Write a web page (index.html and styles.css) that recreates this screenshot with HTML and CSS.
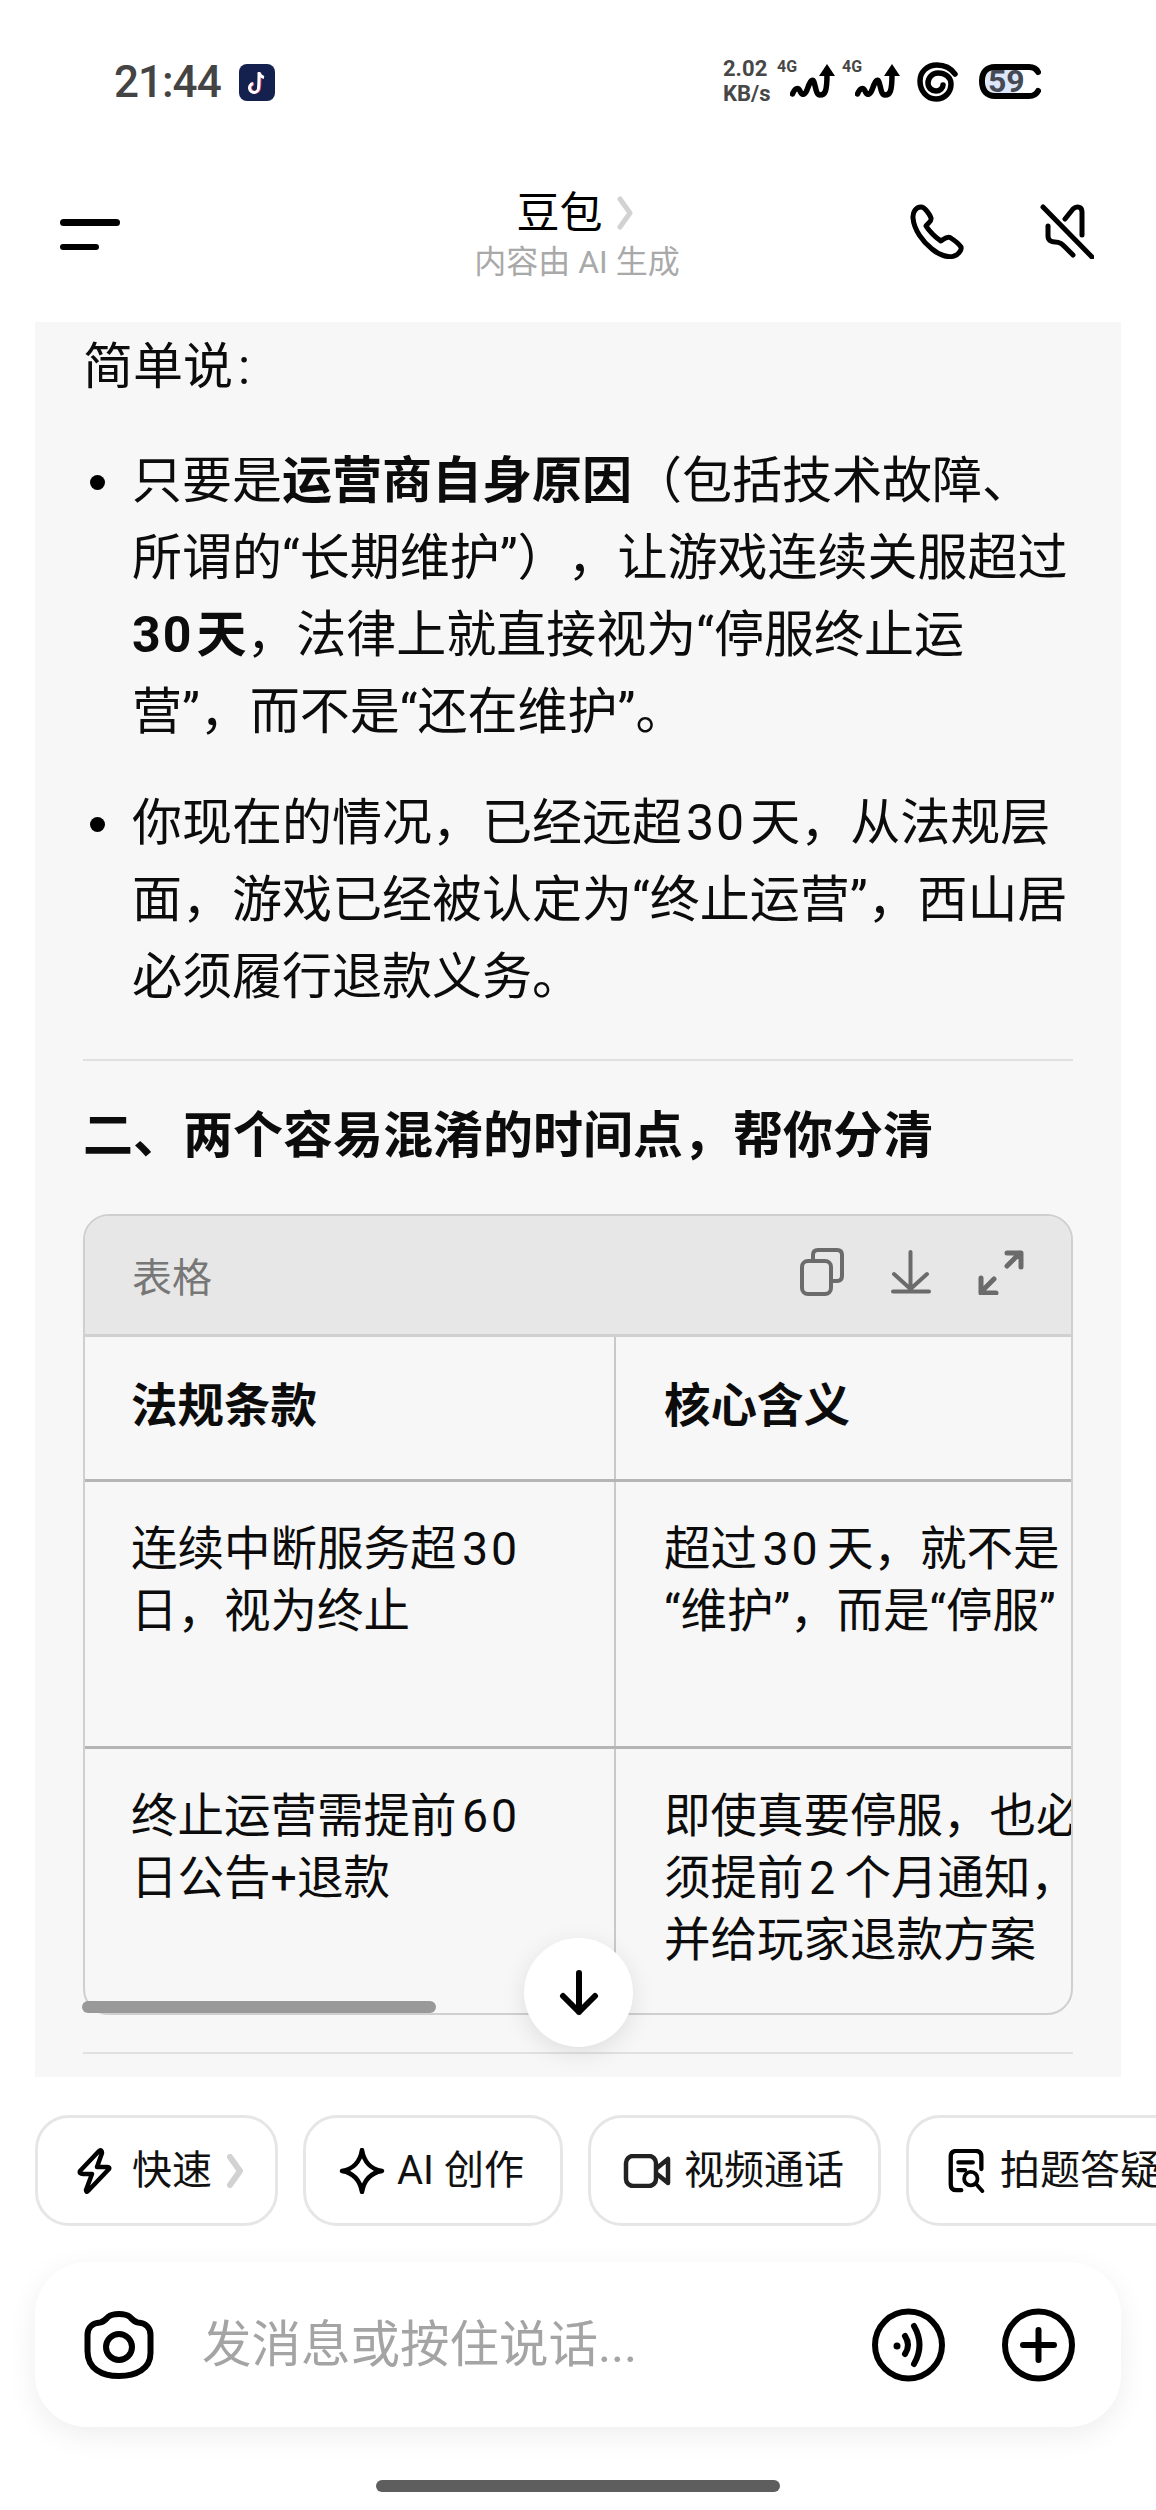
FILE: index.html
```html
<!DOCTYPE html>
<html lang="zh-CN">
<head>
<meta charset="utf-8">
<title>豆包</title>
<link rel="stylesheet" href="styles.css">
</head>
<body>
<div class="screen">
  <div class="status">
    <div class="status-left">
      <span class="time">21:44</span>
      <svg class="tt" width="36" height="37" viewBox="0 0 36 37"><rect width="36" height="37" rx="8" fill="#14204d"/><path d="M21 9C21 14 21 20 20.500 24A4.500 4.500 0 1 1 15 19.500" fill="none" stroke="#f0475e" stroke-width="3"/><path d="M20 8C20 10 22 13 25 13.500M20 9C20 14 20 20 19.500 24A4.500 4.500 0 1 1 14 19.500" fill="none" stroke="#fff" stroke-width="3"/></svg>
    </div>
    <div class="status-right">
      <div class="speed"><span>2.02</span><span>KB/s</span></div>
      <div class="net">
        <span class="g">4G</span>
        <svg class="sig" width="45" height="34" viewBox="0 0 45 34"><path d="M2.500 30C5 24 8 23 10 27C12 32 15 31 17 26C19 20 22 13 24 18C26 24 26 31 30 31C35 31 37 28 37 10" fill="none" stroke="#000" stroke-width="5.500" stroke-linecap="round"/><path d="M29 12L37 0L45 12Z" fill="#000"/></svg>
      </div>
      <div class="net">
        <span class="g">4G</span>
        <svg class="sig" width="45" height="34" viewBox="0 0 45 34"><path d="M2.500 30C5 24 8 23 10 27C12 32 15 31 17 26C19 20 22 13 24 18C26 24 26 31 30 31C35 31 37 28 37 10" fill="none" stroke="#000" stroke-width="5.500" stroke-linecap="round"/><path d="M29 12L37 0L45 12Z" fill="#000"/></svg>
      </div>
      <svg class="spiral" width="41" height="40" viewBox="0 0 41 40"><path d="M38 12C33 5 26 3 20 3C10 3 3 10 3 19C3 29 10 37 19 37C28 37 34 30 34 22C34 15 28 11 21 11C15 11 11 16 11 21C11 26 15 29 19 29C23 29 26 26 26 23" fill="none" stroke="#000" stroke-width="5.500" stroke-linecap="round"/></svg>
      <div class="battery">
        <svg width="62" height="37" viewBox="0 0 62 37"><rect x="7" y="7" width="33" height="23" rx="6" fill="#dde7fb"/><path d="M59 9C57 5 54 4 50 4L16 4C8 4 3 9 3 18C3 28 8 33 16 33L50 33C54 33 57 32 59 28" fill="none" stroke="#000" stroke-width="6" stroke-linecap="round"/></svg>
        <span class="batt-num">59</span>
      </div>
    </div>
  </div>

  <div class="topbar">
    <div class="menu"><i class="menu-a"></i><i class="menu-b"></i></div>
    <div class="title-wrap">
      <div class="title"><span>豆包</span><svg width="17" height="34" viewBox="0 0 17 34"><path d="M3 3L13 17L3 31" fill="none" stroke="#d2d2d2" stroke-width="5" stroke-linecap="round" stroke-linejoin="round"/></svg></div>
      <div class="sub">内容由 AI 生成</div>
    </div>
    <div class="top-actions">
      <svg width="54" height="55" viewBox="0 0 54 55"><path d="M11 3C6 3 2.500 8 3 14C4 26 13 38 22 45C29 51 38 54 44 52C48 51 52 46 51 43C49 40 44 36 40 33.500C37 32 34 35 31 37C26 34 19 27 16 22C18 19 22 17 21 14C20 11 15 3 11 3Z" fill="none" stroke="#000" stroke-width="5" stroke-linejoin="round"/></svg>
      <svg width="54" height="55" viewBox="0 0 54 55"><path d="M3 3L52 53M25 15L33 5C36 2 42 2 42 8L42 31M8 22L8 32C8 36 11 38 15 38C20 38 22 40 25 43L33 51" fill="none" stroke="#000" stroke-width="5" stroke-linecap="round" stroke-linejoin="round"/></svg>
    </div>
  </div>

  <main class="panel">
    <p class="para">简单说<span class="colon">:</span></p>
    <ul class="bullets">
      <li><div>只要是<b>运营商自身原因</b>（包括技术故障、<br>所谓的“长期维护”），让游戏连续关服超过<br><b><span class="num-lead">30</span>天</b>，法律上就直接视为“停服终止运<br>营”，而不是“还在维护”。</div></li>
      <li><div>你现在的情况，已经远超<span class="num">30</span>天，从法规层<br>面，游戏已经被认定为“终止运营”，西山居<br>必须履行退款义务。</div></li>
    </ul>
    <hr class="rule">
    <h2 class="heading">二、两个容易混淆的时间点，帮你分清</h2>
    <div class="card-wrap">
      <section class="card">
        <div class="toolbar">
          <span class="tool-label">表格</span>
          <div class="tools">
            <svg width="44" height="48" viewBox="0 0 44 48"><rect x="2" y="13" width="29" height="33" rx="6" fill="none" stroke="#6b6b6b" stroke-width="4"/><path d="M13 12V7Q13 2 18 2H37Q42 2 42 7V28Q42 33 37 33H32" fill="none" stroke="#6b6b6b" stroke-width="4"/></svg>
            <svg width="40" height="44" viewBox="0 0 40 44"><path d="M19.500 2V39M3 24L19.500 39L36 24M2 41.500H38" fill="none" stroke="#6b6b6b" stroke-width="4" stroke-linecap="round" stroke-linejoin="round"/></svg>
            <svg width="46" height="46" viewBox="0 0 46 46"><path d="M29 4H43V18M42 4L29 17M3 29V44H18M3 43L16 30" fill="none" stroke="#6b6b6b" stroke-width="5" stroke-linecap="round" stroke-linejoin="round"/></svg>
          </div>
        </div>
        <table class="tbl">
          <colgroup><col class="c1"><col class="c2"></colgroup>
          <tr class="r-head"><th>法规条款</th><th>核心含义</th></tr>
          <tr class="r-one"><td>连续中断服务超<span class="num">30</span><br>日，视为终止</td><td>超过<span class="num">30</span>天，就不是<br>“维护”，而是“停服”</td></tr>
          <tr class="r-two"><td>终止运营需提前<span class="num">60</span><br>日公告+退款</td><td>即使真要停服，也必<br>须提前<span class="num">2</span>个月通知，<br>并给玩家退款方案</td></tr>
        </table>
      </section>
      <div class="thumb"></div>
    </div>
    <hr class="rule rule-b">
    <button class="down"><svg width="40" height="46" viewBox="0 0 40 46"><path d="M20 3V42M4 26L20 42L36 26" fill="none" stroke="#000" stroke-width="6" stroke-linecap="round" stroke-linejoin="round"/></svg></button>
  </main>

  <div class="chips">
    <div class="chip chip-a"><svg width="36" height="46" viewBox="0 0 34 46"><path d="M22 3L3 23Q2 26 6 26L15 26L9 42Q9 45 11 43L32 21Q33 19 30 19L20 19L25 5Q25 1 22 3Z" fill="none" stroke="#000" stroke-width="4.500" stroke-linejoin="round"/></svg><span>快速</span><svg class="chev" width="16" height="34" viewBox="0 0 16 34"><path d="M3 3L13 17L3 31" fill="none" stroke="#d2d2d2" stroke-width="6" stroke-linecap="round" stroke-linejoin="round"/></svg></div>
    <div class="chip chip-b"><svg width="46" height="46" viewBox="0 0 44 46"><path d="M22 2C24 14 30 21 42 23C30 25 24 32 22 44C20 32 14 25 2 23C14 21 20 14 22 2Z" fill="none" stroke="#000" stroke-width="4.500" stroke-linejoin="round"/></svg><span>AI 创作</span></div>
    <div class="chip chip-c"><svg width="48" height="34" viewBox="0 0 46 34"><rect x="2" y="2" width="30" height="30" rx="7" fill="none" stroke="#222" stroke-width="4.500"/><path d="M33 14L44 5V29L33 20" fill="none" stroke="#222" stroke-width="4.500" stroke-linejoin="round"/></svg><span>视频通话</span></div>
    <div class="chip chip-d"><svg width="38" height="44" viewBox="0 0 38 46"><path d="M13 43H8Q2 43 2 37V8Q2 2 8 2H28Q34 2 34 8V21M10 14H25M10 22H17" fill="none" stroke="#000" stroke-width="4.500" stroke-linecap="round"/><circle cx="23" cy="31" r="7" fill="none" stroke="#000" stroke-width="4"/><path d="M28 36L35 44" fill="none" stroke="#000" stroke-width="4" stroke-linecap="round"/></svg><span>拍题答疑</span></div>
  </div>

  <div class="composer">
    <svg width="70" height="68" viewBox="0 0 70 68"><path d="M3.500 40V24C3.500 16 9 12 16 11.500C20 11 22 8 24 6C27 3.500 31 3 35 3C39 3 43 3.500 46 6C48 8 50 11 54 11.500C61 12 66.500 16 66.500 24V42C66.500 58 52 65 35 65C18 65 3.500 58 3.500 40Z" fill="none" stroke="#000" stroke-width="6" stroke-linejoin="round"/><circle cx="35" cy="36" r="13" fill="none" stroke="#000" stroke-width="6"/></svg>
    <span class="placeholder">发消息或按住说话...</span>
    <div class="comp-actions">
      <svg width="73" height="74" viewBox="0 0 73 74"><circle cx="36.500" cy="37" r="33.500" fill="none" stroke="#000" stroke-width="6"/><circle cx="25" cy="38" r="3.500" fill="#000"/><path d="M33 28Q39 37 33 46M42 18Q53 37 42 56" fill="none" stroke="#000" stroke-width="6" stroke-linecap="round"/></svg>
      <svg width="73" height="74" viewBox="0 0 73 74"><circle cx="36.500" cy="37" r="33.500" fill="none" stroke="#000" stroke-width="6"/><path d="M21 37H52M36.500 22V52" fill="none" stroke="#000" stroke-width="6" stroke-linecap="round"/></svg>
    </div>
  </div>

  <div class="home"></div>
</div>
</body>
</html>
```
FILE: styles.css
```css
* { box-sizing: border-box; }
html, body { margin: 0; padding: 0; background: #fff; }
body { font-family: Roboto, "Noto Sans CJK SC", sans-serif; color: #0c0c0c; text-spacing-trim: space-all; }
.screen { width: 1156px; height: 2510px; overflow: hidden; display: flex; flex-direction: column; }

.status { height: 160px; padding: 59px 115px 0 114px; display: flex; justify-content: space-between; align-items: flex-start; flex: none; }
.status-left { display: flex; align-items: center; gap: 18px; height: 46px; }
.time { font-size: 44px; font-weight: 500; color: #444; line-height: 46px; letter-spacing: -1px; }
.status-right { display: flex; align-items: flex-start; height: 46px; }
.speed { display: flex; flex-direction: column; width: 54px; font-size: 22px; font-weight: 700; line-height: 25px; color: #474747; margin-top: -3px; white-space: nowrap; }
.net { display: flex; align-items: flex-start; width: 65px; }
.g { font-size: 16px; font-weight: 700; color: #474747; line-height: 14px; margin-top: 1px; }
.sig { margin-left: -7px; margin-top: 5px; }
.spiral { margin: 3px 21px 0 10px; flex: none; }
.battery { position: relative; width: 62px; height: 37px; margin-top: 4px; flex: none; }
.battery svg { display: block; }
.batt-num { position: absolute; left: 9px; top: 0; font-size: 32px; font-weight: 700; line-height: 37px; color: #454a55; }

.topbar { height: 162px; flex: none; display: grid; grid-template-columns: 1fr auto 1fr; padding: 0 62px 0 60px; }
.menu { display: flex; flex-direction: column; gap: 18px; padding-top: 59px; }
.menu i { display: block; height: 6.500px; border-radius: 4px; background: #000; }
.menu-a { width: 60px; }
.menu-b { width: 39px; }
.title-wrap { display: flex; flex-direction: column; align-items: center; padding-top: 25px; }
.title { display: flex; align-items: center; gap: 14px; font-size: 43px; line-height: 56px; height: 56px; margin-right: 4px; color: #000; }
.sub { font-size: 32px; line-height: 44px; margin-top: -1px; color: #a9a9a9; }
.top-actions { display: flex; justify-content: flex-end; gap: 76px; padding-top: 44px; }

.panel { position: relative; height: 1755px; flex: none; margin: 0 35px; padding: 7px 48px 0; background: #f7f7f7; overflow: hidden; }
.para { margin: 0 0 37px; font-size: 50px; line-height: 77px; }
.colon { margin-left: 5px; }
.bullets { margin: 0; padding: 0; list-style: none; font-size: 50px; line-height: 77px; white-space: nowrap; }
.bullets li { display: flex; margin-bottom: 34px; }
.bullets li::before { content: ""; flex: none; width: 15px; height: 15px; margin: 32px 27px 0 7px; border-radius: 50%; background: #000; }
.bullets b { font-weight: 700; }
.num { letter-spacing: .04em; margin: 0 .08em; }
.num-lead { letter-spacing: .04em; margin-right: .06em; }
.rule { height: 2px; margin: 0; border: 0; background: #e1e1e1; }
.bullets + .rule { margin-top: 43px; }
.heading { margin: 37px 0 39px; font-size: 50px; line-height: 77px; font-weight: 700; white-space: nowrap; }
.card-wrap { position: relative; }
.card { height: 801px; border: 2px solid #cfcfcf; border-radius: 26px; overflow: hidden; }
.toolbar { height: 121px; display: flex; align-items: center; justify-content: space-between; padding: 0 47px; background: #e7e7e7; border-bottom: 3px solid #d0d0d0; }
.tool-label { font-size: 40px; color: #777; }
.tools { display: flex; align-items: center; gap: 47px; margin-bottom: 6px; }
.tools svg { display: block; }
.tbl { table-layout: fixed; width: 1100px; border-collapse: collapse; font-size: 46.500px; line-height: 62px; white-space: nowrap; }
.tbl .num { margin: 0 .14em 0 .12em; letter-spacing: .06em; }
.c1 { width: 530px; }
.c2 { width: 570px; }
.tbl th, .tbl td { padding: 36px 0 0 48px; text-align: left; vertical-align: top; border-right: 2px solid #c9c9c9; border-bottom: 3px solid #b5b5b5; }
.tbl th:first-child, .tbl td:first-child { padding-left: 46px; }
.tbl th { font-weight: 700; padding-top: 38px; }
.r-head th { height: 143px; }
.r-one td { height: 267px; }
.r-two td { height: 268px; border-bottom: 0; }
.thumb { position: absolute; left: -1px; bottom: 2px; width: 354px; height: 12px; border-radius: 6px; background: #999; }
.rule-b { margin-top: 37px; }
.down { position: absolute; left: 489px; top: 1616px; width: 109px; height: 109px; padding: 0; display: flex; align-items: center; justify-content: center; border: 0; border-radius: 50%; background: #fff; box-shadow: 0 6px 24px rgba(0,0,0,.10); }

.chips { flex: none; display: flex; gap: 25px; margin-top: 38px; padding-left: 35px; height: 111px; white-space: nowrap; overflow: hidden; }
.chip { flex: none; display: flex; align-items: center; height: 111px; padding: 0 35px 0 38px; border: 3px solid #e6e6e6; border-radius: 34px; font-size: 40px; line-height: 50px; background: #fff; color: #111; }
.chip svg { flex: none; }
.chip-a { width: 243px; gap: 20px; padding-right: 0; }
.chev { margin-left: -5px; }
.chip-b { width: 260px; gap: 12px; padding-left: 33px; }
.chip-c { width: 293px; gap: 13px; padding-left: 32px; }
.chip-d { width: 340px; gap: 14px; padding-left: 39px; }

.composer { flex: none; display: flex; align-items: center; height: 165px; margin: 36px 35px 0; padding: 0 46px 0 49px; background: #fff; border-radius: 52px; box-shadow: 0 8px 30px rgba(0,0,0,.07); }
.placeholder { flex: 1; margin-left: 48px; margin-bottom: 8px; font-size: 49.500px; color: #a4a4a4; }
.comp-actions { display: flex; gap: 57px; }
.home { flex: none; width: 404px; height: 12px; margin: 53px auto 0; border-radius: 6px; background: #5e5e5e; }
```
